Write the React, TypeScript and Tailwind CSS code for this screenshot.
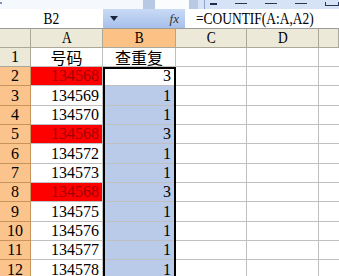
const rows: { n: number; a: string; b: string; dup?: boolean }[] = [
  { n: 2, a: "134568", b: "3", dup: true },
  { n: 3, a: "134569", b: "1" },
  { n: 4, a: "134570", b: "1" },
  { n: 5, a: "134568", b: "3", dup: true },
  { n: 6, a: "134572", b: "1" },
  { n: 7, a: "134573", b: "1" },
  { n: 8, a: "134568", b: "3", dup: true },
  { n: 9, a: "134575", b: "1" },
  { n: 10, a: "134576", b: "1" },
  { n: 11, a: "134577", b: "1" },
  { n: 12, a: "134578", b: "1" },
];

const serif = "font-[family-name:'Liberation_Serif','Times_New_Roman',serif]";
// narrow serif, close to the SimSun latin glyphs of the original
const narrow = `${serif} text-[16px] inline-block scale-x-[0.84]`;

const ColHead = ({ label, active }: { label: string; active?: boolean }) => (
  <div
    className={`flex items-center justify-center border-r border-b border-[#aca899] ${
      active ? "bg-[#fbc185]" : "bg-[#ece9d8]"
    }`}
  >
    <span className={narrow}>{label}</span>
  </div>
);

const App = () => {
  return (
    <div className="w-[339px] h-[276px] overflow-hidden bg-white text-black">
      {/* toolbar remnants */}
      <div className="flex h-[9px] bg-[#d6e2f5]">
        <div className="w-[148px] bg-[#f5f8fd] relative">
          <span className="absolute left-0 top-[2px] w-[2px] h-[2px] bg-[#7f93b8]" />
        </div>
        <div className="w-[12px] bg-[#b8c9e4]" />
        <div className="w-[35px] bg-[#fbfcfe]" />
        <div className="w-[10px] bg-[#b8c9e4]" />
        <div className="w-[6px]" />
        <div className="w-px bg-[#8ea3c8]" />
        <div className="flex flex-1 items-center gap-[18px] pl-[5px] pb-[2px]">
          <span className="w-[7px] h-[2px] bg-[#1f2b4a]" />
          <span className="w-[12px] h-[1px] bg-[#2a3656]" />
          <span className="w-[12px] h-[1px] bg-[#2a3656]" />
          <span className="w-[12px] h-[1px] bg-[#2a3656]" />
          <span className="w-[14px] h-[4px] border border-[#2a3656] border-t-0" />
        </div>
      </div>

      {/* formula bar */}
      <div className="flex h-[20px] border-b border-[#9c9c9c]">
        <div className="w-[103px] bg-white flex items-center justify-center">
          <span className={narrow}>B2</span>
        </div>
        <div className="w-[82px] flex items-center justify-between pl-[7px] pr-[6px] bg-gradient-to-b from-[#c9daf5] to-[#a7c0ea]">
          <svg width="8" height="5" viewBox="0 0 8 5">
            <path d="M0 0 H8 L4 5 Z" fill="#1c2540" />
          </svg>
          <span className={`${serif} italic text-[13px] text-[#333]`}>fx</span>
        </div>
        <div className="flex-1 flex items-center pl-[11px] whitespace-nowrap">
          <span className={`${narrow} origin-left`}>=COUNTIF(A:A,A2)</span>
        </div>
      </div>

      {/* sheet */}
      <div className="relative">
        <div className="grid grid-cols-[31px_72px_73px_71px_72px_20px] grid-rows-[19px_19px_19px_20px_19px_19px_20px_19px_19px_20px_19px_19px_20px]">
          <div className="border-r border-b border-[#aca899] bg-[#ece9d8]" />
          <ColHead label="A" />
          <ColHead label="B" active />
          <ColHead label="C" />
          <ColHead label="D" />
          <ColHead label="" />

          <div className={`flex items-center justify-center border-r border-b border-[#aca899] bg-[#ece9d8] ${serif} text-[16px]`}>
            1
          </div>
          <div className="flex items-center justify-center border-r border-b border-[#c0c0c0] font-[family-name:'Noto_Sans_CJK_SC',sans-serif] text-[16px] leading-none">
            号码
          </div>
          <div className="flex items-center justify-center border-r border-b border-[#c0c0c0] font-[family-name:'Noto_Sans_CJK_SC',sans-serif] text-[16px] leading-none">
            查重复
          </div>
          <div className="border-r border-b border-[#c0c0c0]" />
          <div className="border-r border-b border-[#c0c0c0]" />
          <div className="border-b border-[#c0c0c0]" />

          {rows.map((r) => (
            <div key={r.n} className="contents">
              <div
                className={`flex items-center justify-center border-r border-b border-[#c8945c] bg-[#fbc48c] ${serif} text-[16px]`}
              >
                {r.n}
              </div>
              <div
                className={`flex items-center justify-end pr-[3px] border-r border-b border-[#c0c0c0] ${serif} text-[16px] ${
                  r.dup ? "bg-[#ff0000] text-[#a30000]" : "bg-white"
                }`}
              >
                {r.a}
              </div>
              <div
                className={`flex items-center justify-end pr-[4px] border-r border-b border-[#c0c0c0] ${serif} text-[16px] ${
                  r.n === 2 ? "bg-white" : "bg-[#b9cbe8]"
                }`}
              >
                {r.b}
              </div>
              <div className="border-r border-b border-[#c0c0c0]" />
              <div className="border-r border-b border-[#c0c0c0]" />
              <div className="border-b border-[#c0c0c0]" />
            </div>
          ))}
        </div>

        {/* selection outline B2:B12 */}
        <div className="absolute left-[103px] top-[38px] w-[73px] h-[220px] border-2 border-black pointer-events-none" />
      </div>
    </div>
  );
};

export default App;
